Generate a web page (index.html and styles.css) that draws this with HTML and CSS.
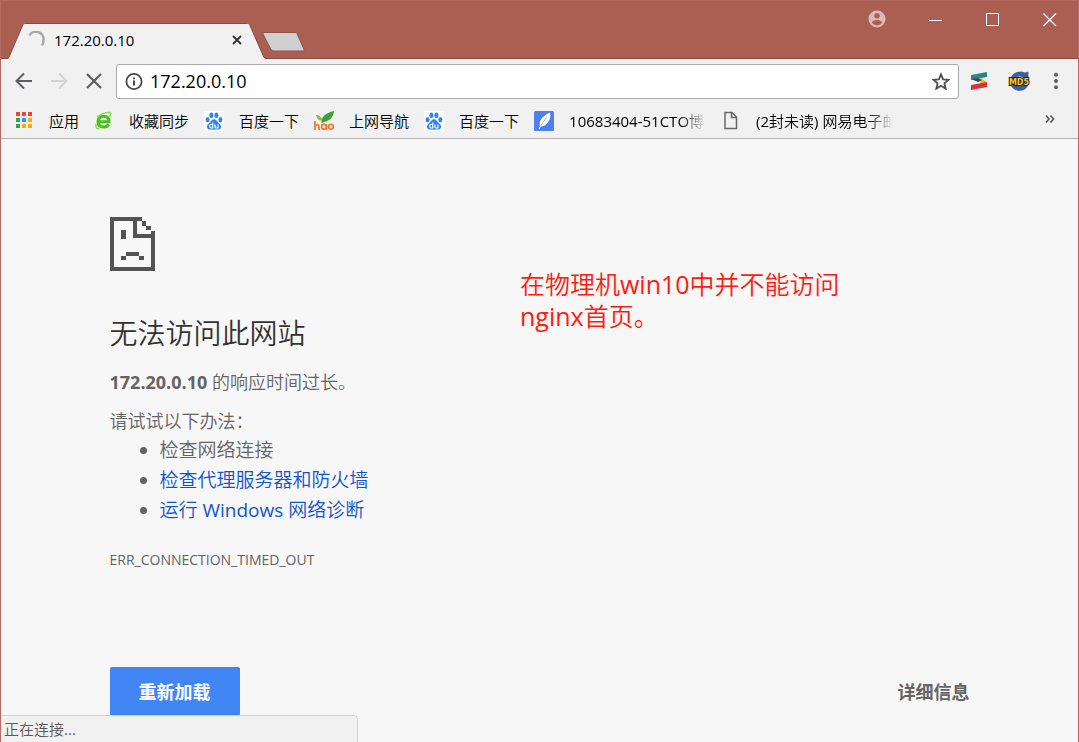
FILE: index.html
```html
<!DOCTYPE html>
<html lang="zh-CN">
<head>
<meta charset="utf-8">
<title>172.20.0.10</title>
<link rel="stylesheet" href="styles.css">
</head>
<body>
<div class="window">
  <header class="titlebar">
    <div class="tab">
      <svg class="tab-shape" width="258" height="36" viewBox="0 0 258 36" aria-hidden="true"><path d="M0 36 1 34.500 15 1.500Q15.500 .500 16.500 .500H239.500Q241 .500 241.500 1.500L256 34.500 258 36Z" fill="#f1f1f1"/><path d="M0 35 1 34 15 1.500Q15.500 .500 16.500 .500H239.500Q241 .500 241.500 1.500L256 34.500 258 35.500" fill="none" stroke="#8a4a40"/></svg>
      <svg class="spinner" width="18" height="18" viewBox="0 0 18 18" aria-hidden="true"><path d="M1.500 4.500A7.500 7.500 0 0 1 15.500 9Q15.500 12 14 14.500" fill="none" stroke="#a6a6a6" stroke-width="2.400"/></svg>
      <span class="tab-title">172.20.0.10</span>
      <button class="tab-close" aria-label="关闭标签页"><svg width="10" height="10" viewBox="0 0 10 10"><path d="M1 1 9 9M9 1 1 9" stroke="#333" stroke-width="1.800"/></svg></button>
    </div>
    <button class="new-tab" aria-label="新标签页"><svg width="44" height="22" viewBox="0 0 44 22"><path d="M3 1.500H34Q35.500 1.500 36 2.500L43 18.500Q43.500 20 42 20H13Q11 20 10 18.500L2 3Q1.500 1.500 3 1.500Z" fill="#cfcfcf" stroke="#8f5148"/></svg></button>
    <div class="window-controls">
      <button class="profile" aria-label="用户"><svg width="18" height="18" viewBox="0 0 18 18"><path fill="#dcb9b4" fill-rule="evenodd" d="M9 .500a8.500 8.500 0 1 0 0 17 8.500 8.500 0 0 0 0-17ZM9 3a2.700 2.700 0 1 1 0 5.400A2.700 2.700 0 0 1 9 3Zm0 12.300c-2.200 0-4-1-5-2.700.200-1.700 3.300-2.600 5-2.600s4.800.900 5 2.600c-1 1.700-2.800 2.700-5 2.700Z"/></svg></button>
      <button aria-label="最小化"><svg width="14" height="14" viewBox="0 0 14 14"><path d="M0 7.500H13" stroke="#fff"/></svg></button>
      <button aria-label="最大化"><svg width="14" height="14" viewBox="0 0 14 14"><path d="M.500.500H12.500V12.500H.500Z" fill="none" stroke="#fff"/></svg></button>
      <button aria-label="关闭"><svg width="14" height="14" viewBox="0 0 14 14"><path d="M.500.500 13 13M13 .500.500 13" stroke="#fff" stroke-width="1.200"/></svg></button>
    </div>
  </header>

  <nav class="toolbar" aria-label="导航">
    <button aria-label="后退"><svg width="18" height="18" viewBox="0 0 18 18"><path d="M17 9H2M9 1.500 1.500 9 9 16.500" fill="none" stroke="#5a5d62" stroke-width="2"/></svg></button>
    <button aria-label="前进"><svg width="18" height="18" viewBox="0 0 18 18"><path d="M1 9H16M9 1.500 16.500 9 9 16.500" fill="none" stroke="#d2d2d2" stroke-width="2"/></svg></button>
    <button aria-label="停止加载"><svg width="18" height="18" viewBox="0 0 18 18"><path d="M2 2 16 16M16 2 2 16" stroke="#5a5d62" stroke-width="2.200"/></svg></button>
    <div class="omnibox">
      <svg width="18" height="18" viewBox="0 0 18 18" aria-hidden="true"><circle cx="9" cy="9.500" r="7.600" fill="none" stroke="#4a4a4a" stroke-width="1.800"/><path d="M9 8.500V13.500M9 5.500V7.300" stroke="#4a4a4a" stroke-width="2"/></svg>
      <input class="address" type="text" value="172.20.0.10" aria-label="地址">
      <button aria-label="为此网页添加书签"><svg width="18" height="18" viewBox="0 0 18 18"><path d="M9 2.400 11.100 7.400 16.500 7.800 12.400 11.400 13.700 16.700 9 13.800 4.300 16.700 5.600 11.400 1.500 7.800 6.900 7.400Z" fill="none" stroke="#4d4d4d" stroke-width="1.800"/></svg></button>
    </div>
    <div class="extensions">
      <button aria-label="扩展程序 S"><svg width="18" height="20" viewBox="0 0 18 20"><path d="M1 4 17 1V6L1 9Z" fill="#2f8288"/><path d="M7 9 11 7 17 11V13L11 12Z" fill="#e6bd2d"/><path d="M1 8 8 7 12 9 8 11Z" fill="#24555c"/><path d="M1 14 17 11V16L1 19Z" fill="#d9303e"/></svg></button>
      <button aria-label="MD5"><svg width="22" height="20" viewBox="0 0 22 20"><path d="M20 1V6.500H15Q14 5 11.500 5 7 5.500 7 10 7 15 12 15 14.500 15 15.500 13H20Q18.500 19.500 11 19.500 2.500 18.500 2.500 10 3 2 11 1 14 .500 17 2Z" fill="#3b5fa6" stroke="#284785" stroke-width=".600"/><text class="md5" x="11" y="13.500" text-anchor="middle">MD5</text></svg></button>
      <button class="menu" aria-label="菜单"><svg width="6" height="18" viewBox="0 0 6 18"><g fill="#5a5d62"><circle cx="3" cy="2.700" r="2"/><circle cx="3" cy="9" r="2"/><circle cx="3" cy="15.300" r="2"/></g></svg></button>
    </div>
  </nav>

  <nav class="bookmarks" aria-label="书签">
    <a href="#"><svg width="20" height="20" viewBox="0 0 20 20"><path d="M2 1h4v4H2zM8 1h4v4H8zM14 1h4v4h-4z" fill="#f44336"/><path d="M2 7h4v4H2zM2 13h4v4H2z" fill="#34a153"/><path d="M8 7h4v4H8z" fill="#2d95e8"/><path d="M14 7h4v4h-4zM8 13h4v4H8zM14 13h4v4h-4z" fill="#f9ab0b"/></svg><span>应用</span></a>
    <a href="#"><svg width="20" height="20" viewBox="0 0 20 20"><path d="M4 10.800H15Q15 5.300 9.800 5.300T4 10.800Q4 16 9.800 16 13 16 14.800 13.500" fill="none" stroke="#45c414" stroke-width="3"/><path d="M2 13Q1 18.500 5.500 17.500M3 6Q9 1 16 1.500 17.500 3 15.500 6" fill="none" stroke="#8ad95c" stroke-width="1.600"/></svg><span>收藏同步</span></a>
    <a href="#"><svg width="20" height="20" viewBox="0 0 20 20"><path fill="#fff" d="M0 0h20v20H0z"/><g fill="#2e86f5"><ellipse cx="3.600" cy="8.600" rx="2" ry="2.700"/><ellipse cx="7.400" cy="4.300" rx="2" ry="2.800"/><ellipse cx="12.400" cy="4.300" rx="2" ry="2.800"/><ellipse cx="16.400" cy="8.600" rx="2" ry="2.700"/><path d="M10 8.200C7.300 8.200 7 11 4.500 12.700 2 14.700 2.700 18.500 6 18.600 8 18.700 12 18.700 14 18.600 17.500 18.500 18 14.700 15.500 12.700 13 11 12.700 8.200 10 8.200Z"/></g><path d="M8.700 11.500V17H7.200Q5.700 17 5.700 15.200T7.200 13.500H8.700M11 13.500V15.700Q11 17 12.300 17H14V13.500" fill="none" stroke="#fff" stroke-width="1.200"/></svg><span>百度一下</span></a>
    <a href="#"><svg width="20" height="20" viewBox="0 0 20 20"><path d="M2 4Q7 4 8.500 9.500 3 10 2 4Z" fill="#97c11f"/><path d="M7.500 12Q7 3 20 0 20 9 7.500 12Z" fill="#3ca437"/><g fill="none" stroke="#ef782b" stroke-width="1.700"><path d="M1 10V19M1 15Q4.500 12 5 15.500V19"/><circle cx="10" cy="15.700" r="2.400"/><path d="M12.500 13V19"/><circle cx="17" cy="15.700" r="2.300"/></g></svg><span>上网导航</span></a>
    <a href="#"><svg width="20" height="20" viewBox="0 0 20 20"><path fill="#fff" d="M0 0h20v20H0z"/><g fill="#2e86f5"><ellipse cx="3.600" cy="8.600" rx="2" ry="2.700"/><ellipse cx="7.400" cy="4.300" rx="2" ry="2.800"/><ellipse cx="12.400" cy="4.300" rx="2" ry="2.800"/><ellipse cx="16.400" cy="8.600" rx="2" ry="2.700"/><path d="M10 8.200C7.300 8.200 7 11 4.500 12.700 2 14.700 2.700 18.500 6 18.600 8 18.700 12 18.700 14 18.600 17.500 18.500 18 14.700 15.500 12.700 13 11 12.700 8.200 10 8.200Z"/></g><path d="M8.700 11.500V17H7.200Q5.700 17 5.700 15.200T7.200 13.500H8.700M11 13.500V15.700Q11 17 12.300 17H14V13.500" fill="none" stroke="#fff" stroke-width="1.200"/></svg><span>百度一下</span></a>
    <a href="#"><svg width="20" height="20" viewBox="0 0 20 20"><rect width="20" height="20" rx="1.500" fill="#4d80ea"/><path d="M16 1.500Q17.500 8 12.500 13 10 15.500 7 15.500L5 18.500 4.500 18 6 15Q4.500 10 9 6 12 3 16 1.500Z" fill="#fff"/><path d="M6 15.500 13 6" stroke="#85a9f2" stroke-width=".800"/></svg><span class="long">10683404-51CTO博</span></a>
    <a href="#"><svg width="20" height="20" viewBox="0 0 20 20"><path d="M4 1.500H11L15.500 6V17.500H4ZM10.500 1.500V6.500H15.500" fill="none" stroke="#686868" stroke-width="1.500"/></svg><span class="long">(2封未读) 网易电子邮</span></a>
    <button class="overflow" aria-label="更多书签"><svg width="10" height="10" viewBox="0 0 10 10"><path d="M1 1.500 4 5 1 8.500M5.500 1.500 8.500 5 5.500 8.500" fill="none" stroke="#5a5a5a" stroke-width="1.700"/></svg></button>
  </nav>

  <main class="page">
    <div class="error">
      <svg class="sad-page" width="45" height="54" viewBox="0 0 45 54" aria-hidden="true"><path fill="#535353" d="M0 0H32V4H27V17H41V14H45V54H0ZM4 4V50H41V21H23V4ZM32 4H36V9H32ZM36 9H41V13H36ZM11 13H16V22H11ZM16 35H29V39H16ZM11 39H16V43H11ZM29 39H34V43H29Z" fill-rule="evenodd"/></svg>
      <h1>无法访问此网站</h1>
      <p class="reason"><strong>172.20.0.10</strong> 的响应时间过长。</p>
      <p class="hint">请试试以下办法：</p>
      <ul>
        <li>检查网络连接</li>
        <li><a href="#">检查代理服务器和防火墙</a></li>
        <li><a href="#">运行 Windows 网络诊断</a></li>
      </ul>
      <p class="code">ERR_CONNECTION_TIMED_OUT</p>
      <div class="actions">
        <button class="reload">重新加载</button>
        <button class="details">详细信息</button>
      </div>
    </div>
    <p class="note">在物理机win10中并不能访问<br>nginx首页。</p>
  </main>
  <div class="status" role="status">正在连接...</div>
</div>
</body>
</html>
```
FILE: styles.css
```css
* { box-sizing: border-box; }

body {
  margin: 0;
  background: #f7f7f7;
  font-family: "Open Sans", "Noto Sans CJK SC DemiLight", "Noto Sans CJK SC", sans-serif;
  font-size: 15px;
  color: #000;
}

button {
  display: flex;
  align-items: center;
  justify-content: center;
  padding: 0;
  border: 0;
  background: none;
  font: inherit;
}

svg { display: block; flex: none; }
h1, p, ul { margin: 0; }

.window {
  position: relative;
  display: flex;
  flex-direction: column;
  min-height: 100vh;
  border: 1px solid #b66b60;
  border-bottom: 0;
  overflow: hidden;
}

/* Title bar */
.titlebar {
  display: flex;
  align-items: flex-end;
  height: 58px;
  padding-left: 7px;
  background: #ab5f52;
  box-shadow: inset 0 -1px #8a4a40;
}

.tab {
  position: relative;
  display: flex;
  align-items: center;
  width: 258px;
  height: 36px;
  padding: 0 24px 2px 20px;
}

.tab-shape { position: absolute; inset: 0; }
.spinner, .tab-title, .tab-close { position: relative; }
.tab-title { flex: 1; padding-left: 8px; }

.new-tab { align-self: flex-end; margin-bottom: 6px; margin-left: -5px; }

.window-controls {
  display: flex;
  align-self: flex-start;
  margin-left: auto;
}

.window-controls button { width: 57px; height: 37px; }
.window-controls .profile { width: 61px; height: 35px; }

/* Toolbar */
.toolbar {
  display: flex;
  align-items: center;
  gap: 17px;
  height: 44px;
  padding: 0 19px 0 14px;
  background: #f1f1f1;
}

.omnibox {
  display: flex;
  flex: 1;
  align-items: center;
  gap: 7px;
  height: 35px;
  margin-left: -4px;
  padding: 0 8px;
  border: 1px solid #a9a9a9;
  border-radius: 3px;
  background: #fff;
}

.address {
  flex: 1;
  min-width: 0;
  padding: 0;
  border: 0;
  outline: 0;
  background: none;
  font: inherit;
  font-size: 18px;
}

.extensions { display: flex; align-items: center; gap: 20px; margin-left: -6px; }
.menu { margin-left: 3px; }
.md5 { font: bold 8px "DejaVu Sans", sans-serif; fill: #f4c52c; stroke: #222; stroke-width: 2px; paint-order: stroke; }

/* Bookmarks */
.bookmarks {
  display: flex;
  align-items: center;
  gap: 15px;
  height: 36px;
  padding: 0 23px 0 13px;
  border-bottom: 1px solid #b4b4b4;
  background: #f1f1f1;
}

.bookmarks a {
  display: flex;
  align-items: center;
  gap: 15px;
  color: inherit;
  text-decoration: none;
  white-space: nowrap;
}

.long {
  min-width: 137px;
  mask-image: linear-gradient(to right, #000 112px, transparent 137px);
}

.overflow { margin-left: auto; padding-bottom: 3px; }

/* Error page */
.page {
  position: relative;
  flex: 1;
  padding: 78px 24px 26px;
  color: #646464;
}

.error { max-width: 860px; margin: 0 auto; }
h1 { margin-top: 42px; font-size: 28px; font-weight: 400; line-height: 40px; color: #333; }
.reason, .hint { font-size: 18px; line-height: 26px; }
.reason { margin-top: 16px; }
.hint { margin-top: 13px; }
ul { margin-top: 1px; padding-left: 50px; font-size: 19px; line-height: 30px; }
ul a { color: #1155cc; text-decoration: none; }
.code { margin-top: 25px; font-size: 14px; line-height: 20px; }

.actions { display: flex; justify-content: space-between; margin-top: 97px; }
.actions button {
  height: 49px;
  padding-bottom: 2px;
  font-family: "Open Sans", "Noto Sans CJK SC", sans-serif;
  font-size: 18px;
  font-weight: 700;
}
.reload { width: 130px; border-radius: 2px; background: #4285f4; color: #fff; }
.details { color: #646464; }

.note {
  position: absolute;
  top: 129px;
  left: 519px;
  font-size: 25px;
  line-height: 32px;
  color: #ff1a0d;
}

.status {
  position: absolute;
  bottom: 0;
  left: -1px;
  width: 358px;
  height: 27px;
  padding-left: 4px;
  border: 1px solid #d2d2d2;
  border-bottom: 0;
  border-left: 0;
  border-top-right-radius: 5px;
  background: #f1f1f1;
  line-height: 26px;
  color: #5a5a5a;
}
```
